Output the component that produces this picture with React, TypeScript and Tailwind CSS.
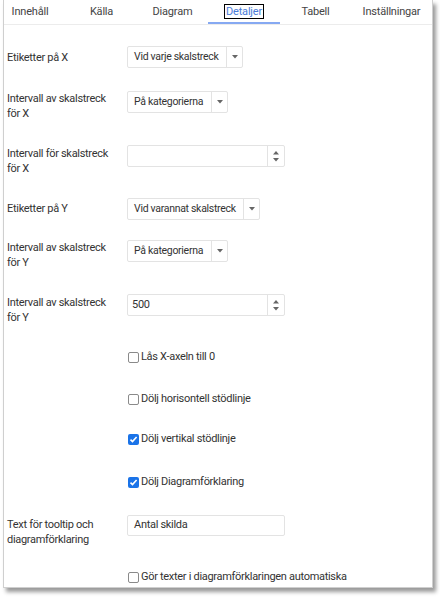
import React from 'react';

const tabs = [
  { label: 'Innehåll', cls: 'w-[62px] pr-[10px]' },
  { label: 'Källa', cls: 'w-[71px]' },
  { label: 'Diagram', cls: 'w-[71px]' },
  { label: 'Detaljer', cls: 'w-[72px]', active: true },
  { label: 'Tabell', cls: 'w-[71px]' },
  { label: 'Inställningar', cls: 'flex-1' },
];

function Select({ value, width }: { value: string; width: string }) {
  return (
    <div className={`flex h-[22px] items-stretch rounded-[2px] border border-[#e3e3e3] bg-white ${width}`}>
      <div className="flex flex-1 items-center whitespace-nowrap pl-[6px] text-[10.5px] text-[#333]">{value}</div>
      <div className="flex w-[16px] items-center justify-center border-l border-[#e3e3e3]">
        <svg width="6" height="4" viewBox="0 0 6 4">
          <path d="M0 0h6L3 3.5z" fill="#666" />
        </svg>
      </div>
    </div>
  );
}

function NumberInput({ value }: { value: string }) {
  return (
    <div className="flex h-[22px] w-[158px] items-stretch rounded-[2px] border border-[#e3e3e3] bg-white">
      <div className="flex flex-1 items-center pl-[4px] text-[11px] text-[#333]">{value}</div>
      <div className="flex w-[17px] flex-col items-center justify-center gap-[3px] border-l border-[#e3e3e3]">
        <svg width="6" height="4" viewBox="0 0 6 4">
          <path d="M0 3.5h6L3 0z" fill="#666" />
        </svg>
        <svg width="6" height="4" viewBox="0 0 6 4">
          <path d="M0 0h6L3 3.5z" fill="#666" />
        </svg>
      </div>
    </div>
  );
}

function Check({ label, checked, mt }: { label: string; checked?: boolean; mt: string }) {
  return (
    <div className={`ml-[121px] flex h-[15px] items-center ${mt}`}>
      {checked ? (
        <span className="flex h-[11px] w-[11px] items-center justify-center rounded-[2px] bg-[#1a73e8]">
          <svg width="9" height="9" viewBox="0 0 9 9">
            <path d="M1.5 4.6l2 2L7.6 2" stroke="white" strokeWidth="1.6" fill="none" />
          </svg>
        </span>
      ) : (
        <span className="h-[11px] w-[11px] rounded-[2px] border border-[#8a8a8a] bg-white" />
      )}
      <span className="ml-[2px] whitespace-nowrap text-[11px] text-[#333]">{label}</span>
    </div>
  );
}

export default function App() {
  return (
    <div className="h-[597px] w-[440px] bg-white" style={{ fontFamily: 'Roboto, "Noto Sans", sans-serif' }}>
      <div className="ml-[3px] flex h-[588px] w-[430px] flex-col border border-t-0 border-[#cfcfcf] bg-white shadow-[3px_4px_4px_rgba(0,0,0,0.4)]">
        {/* Tabs */}
        <div className="flex h-[25px] border-b border-[#ececec] tracking-[-0.2px]">
          {tabs.map((t) => (
            <div key={t.label} className={`relative flex items-start justify-center pt-[4px] text-[11px] ${t.cls}`}>
              {t.active ? (
                <>
                  <span className="border border-black px-[1px] leading-[13px] text-[#4b7bd8]">{t.label}</span>
                  <span className="absolute bottom-[0px] left-0 right-0 h-[2px] bg-[#86a9f2]" />
                </>
              ) : (
                <span className="leading-[15px] text-[#444]">{t.label}</span>
              )}
            </div>
          ))}
        </div>

        <div className="pl-[3px] text-[11px] tracking-[-0.3px] text-[#333]">
          {/* Axis X */}
          <div className="mt-[21px] flex items-start">
            <div className="w-[120px] pt-[4px] leading-[15px]">Etiketter på X</div>
            <Select value="Vid varje skalstreck" width="w-[116px]" />
          </div>
          <div className="mt-[23px] flex items-start">
            <div className="w-[120px] leading-[15px]">Intervall av skalstreck<br />för X</div>
            <Select value="På kategorierna" width="w-[101px]" />
          </div>
          <div className="mt-[24px] flex items-start">
            <div className="w-[120px] pt-[1px] leading-[15px]">Intervall för skalstreck<br />för X</div>
            <NumberInput value="" />
          </div>

          {/* Axis Y */}
          <div className="mt-[22px] flex items-start">
            <div className="w-[120px] pt-[3px] leading-[15px]">Etiketter på Y</div>
            <Select value="Vid varannat skalstreck" width="w-[133px]" />
          </div>
          <div className="mt-[20px] flex items-start">
            <div className="w-[120px] leading-[15px]">Intervall av skalstreck<br />för Y</div>
            <Select value="På kategorierna" width="w-[101px]" />
          </div>
          <div className="mt-[24px] flex items-start">
            <div className="w-[120px] pt-[1px] leading-[15px]">Intervall av skalstreck<br />för Y</div>
            <NumberInput value="500" />
          </div>

          {/* Options */}
          <Check label="Lås X-axeln till 0" mt="mt-[25px]" />
          <Check label="Dölj horisontell stödlinje" mt="mt-[27px]" />
          <Check label="Dölj vertikal stödlinje" checked mt="mt-[25px]" />
          <Check label="Dölj Diagramförklaring" checked mt="mt-[28px]" />

          <div className="mt-[25px] flex items-start">
            <div className="w-[120px] pt-[2px] leading-[15px]">Text för tooltip och<br />diagramförklaring</div>
            <div className="flex h-[21px] w-[158px] items-center rounded-[2px] border border-[#e3e3e3] pl-[6px] text-[11px]">
              Antal skilda
            </div>
          </div>

          <Check label="Gör texter i diagramförklaringen automatiska" mt="mt-[23px]" />
        </div>
      </div>
    </div>
  );
}
